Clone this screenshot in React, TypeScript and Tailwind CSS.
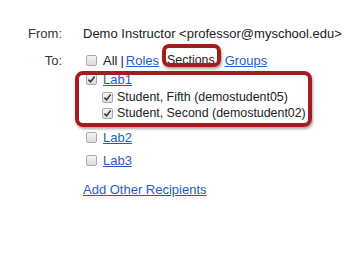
import React from 'react'

function Box({ checked }: { checked?: boolean }) {
  return (
    <span className="inline-flex items-center justify-center w-[11px] h-[11px] border border-[#a9a9a9] rounded-[2px] bg-gradient-to-b from-[#f4f4f4] to-[#dcdcdc] shrink-0">
      {checked && (
        <svg viewBox="0 0 10 10" className="w-[9px] h-[9px]">
          <path d="M1.5 5.2 L4 7.6 L8.5 1.8" fill="none" stroke="#3a3a3a" strokeWidth="1.8" />
        </svg>
      )}
    </span>
  )
}

const link = 'text-[#1f5dc7] underline'

export default function App() {
  return (
    <div className="relative w-[349px] h-[268px] bg-white text-[#222] text-[13px] leading-none" style={{ fontFamily: '"Liberation Sans", Arial, sans-serif' }}>
      <div className="pt-[23px]">
        {/* From */}
        <div className="flex h-[20px] items-center">
          <span className="w-[62px] text-right text-[#333]">From:</span>
          <span className="ml-[21px]">Demo Instructor &lt;professor@myschool.edu&gt;</span>
        </div>

        {/* To */}
        <div className="flex mt-[7px]">
          <span className="w-[62px] text-right text-[#333] h-[20px] flex items-center justify-end">To:</span>
          <div className="ml-[24px] flex flex-col">
            <div className="flex h-[20px] items-center">
              <Box />
              <span className="ml-[6px]">All</span>
              <span className="ml-[3px]">|</span>
              <span className={`ml-[2px] ${link}`}>Roles</span>
              <span className="ml-[8px] text-[12.4px]">Sections</span>
              <span className={`ml-[10px] ${link}`}>Groups</span>
            </div>
            <div className="flex h-[19px] items-center">
              <Box checked />
              <span className={`ml-[6px] ${link}`}>Lab1</span>
            </div>
            <div className="flex h-[16px] items-center ml-[16px] text-[12.4px]">
              <Box checked />
              <span className="ml-[4px]">Student, Fifth (demostudent05)</span>
            </div>
            <div className="flex h-[16px] items-center ml-[16px] text-[12.4px]">
              <Box checked />
              <span className="ml-[4px]">Student, Second (demostudent02)</span>
            </div>
            <div className="flex h-[20px] items-center mt-[6px]">
              <Box />
              <span className={`ml-[6px] ${link}`}>Lab2</span>
            </div>
            <div className="flex h-[20px] items-center mt-[3px]">
              <Box />
              <span className={`ml-[6px] ${link}`}>Lab3</span>
            </div>
            <div className="flex h-[20px] items-center mt-[9px] -ml-[3px]">
              <span className={link}>Add Other Recipients</span>
            </div>
          </div>
        </div>
      </div>

      {/* callout highlights */}
      <div className="absolute left-[162px] top-[44px] w-[59px] h-[23px] border-4 border-[#a31d20] rounded-[7px] shadow-[1px_2px_3px_rgba(0,0,0,0.35)]" />
      <div className="absolute left-[75px] top-[71px] w-[237px] h-[56px] border-4 border-[#a31d20] rounded-[8px] shadow-[1px_2px_3px_rgba(0,0,0,0.35)]" />
    </div>
  )
}
